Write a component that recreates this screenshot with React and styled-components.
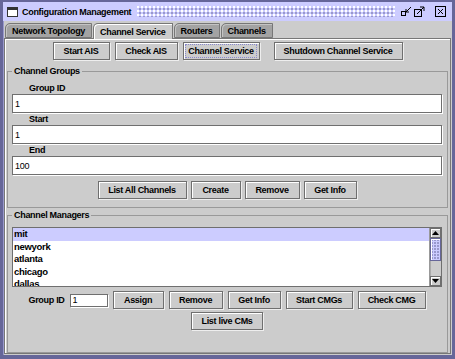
import React from "react";
import styled, { createGlobalStyle } from "styled-components";

const FONT = `"Liberation Sans", Arial, sans-serif`;

const GlobalStyle = createGlobalStyle`
  html, body {
    margin: 0;
    padding: 0;
    background: #666699;
  }
  * {
    box-sizing: border-box;
  }
`;

const managers = ["mit", "newyork", "atlanta", "chicago", "dallas"];

const App = () => {
  return (
    <>
      <GlobalStyle />
      <Frame>
        <TitleBar>
          <WindowIcon />
          <Title>Configuration Management</Title>
          <Bumps />
          <TitleIcons>
            <svg width="11" height="11" viewBox="0 0 11 11">
              <rect x="0.5" y="5.5" width="4" height="4" fill="none" stroke="#000" />
              <path d="M5 6 L10 1" stroke="#000" />
              <path d="M5 3 L5 6 L8 6" fill="none" stroke="#000" />
            </svg>
            <svg width="11" height="11" viewBox="0 0 11 11">
              <rect x="0.5" y="3.5" width="7" height="7" fill="none" stroke="#000" />
              <path d="M3 8 L10 1" stroke="#000" />
              <path d="M6 1 L10 1 L10 5" fill="none" stroke="#000" />
            </svg>
            <svg width="11" height="11" viewBox="0 0 11 11">
              <rect x="0.5" y="0.5" width="10" height="10" fill="#ccccff" stroke="#000" />
              <path d="M3 3 L8 8 M8 3 L3 8" stroke="#000" />
            </svg>
          </TitleIcons>
        </TitleBar>

        <TabStrip>
          <Tab>Network Topology</Tab>
          <Tab selected>Channel Service</Tab>
          <Tab>Routers</Tab>
          <Tab>Channels</Tab>
        </TabStrip>

        <TabPanel>
          <ButtonRow>
            <Button w={57}>Start AIS</Button>
            <Button w={63}>Check AIS</Button>
            <Button w={77}>
              <FocusText>Channel Service</FocusText>
            </Button>
            <Button w={129} lead={9}>Shutdown Channel Service</Button>
          </ButtonRow>

          <Group>
            <Legend>Channel Groups</Legend>
            <FieldLabel first>Group ID</FieldLabel>
            <TextField defaultValue="1" />
            <FieldLabel>Start</FieldLabel>
            <TextField defaultValue="1" />
            <FieldLabel>End</FieldLabel>
            <TextField defaultValue="100" />
            <ButtonRow gap={4} top={6}>
              <Button w={89}>List All Channels</Button>
              <Button w={50}>Create</Button>
              <Button w={55}>Remove</Button>
              <Button w={53}>Get Info</Button>
            </ButtonRow>
          </Group>

          <Group grow>
            <Legend>Channel Managers</Legend>
            <ListBox>
              <ListItems>
                {managers.map((m, i) => (
                  <ListItem key={m} selected={i === 0}>
                    {m}
                  </ListItem>
                ))}
              </ListItems>
              <ScrollBar>
                <ArrowButton>
                  <svg width="7" height="4" viewBox="0 0 7 4">
                    <path d="M0 4 L3.5 0 L7 4 Z" fill="#000" />
                  </svg>
                </ArrowButton>
                <Thumb />
                <Track />
                <ArrowButton>
                  <svg width="7" height="4" viewBox="0 0 7 4">
                    <path d="M0 0 L3.5 4 L7 0 Z" fill="#000" />
                  </svg>
                </ArrowButton>
              </ScrollBar>
            </ListBox>
            <ButtonRow top={4}>
              <InlineLabel>Group ID</InlineLabel>
              <SmallField defaultValue="1" />
              <Button w={51}>Assign</Button>
              <Button w={54}>Remove</Button>
              <Button w={53}>Get Info</Button>
              <Button w={67}>Start CMGs</Button>
              <Button w={68}>Check CMG</Button>
            </ButtonRow>
            <ButtonRow top={3}>
              <Button w={72}>List live CMs</Button>
            </ButtonRow>
          </Group>
        </TabPanel>
      </Frame>
    </>
  );
};

export default App;

// Window frame
const Frame = styled.div`
  width: 455px;
  height: 359px;
  display: flex;
  flex-direction: column;
  background: #cccccc;
  border-style: solid;
  border-color: #666699;
  border-width: 2px 3px 4px 3px;
  box-shadow: inset 1px 1px 0 #9999cc;
  font-family: ${FONT};
  font-size: 9px;
  letter-spacing: -0.3px;
  font-weight: bold;
  color: #000;
  overflow: hidden;
`;

const TitleBar = styled.div`
  height: 19px;
  display: flex;
  align-items: center;
  padding: 0 4px 0 4px;
  background: #ccccff;
`;

const WindowIcon = styled.div`
  width: 11px;
  height: 10px;
  border: 1px solid #333;
  border-top-width: 3px;
  background: #fff;
  margin-right: 4px;
`;

const Title = styled.span`
  white-space: nowrap;
`;

const Bumps = styled.div`
  flex: 1;
  height: 11px;
  margin: 0 6px;
  background-image: radial-gradient(circle at 1px 1px, #fff 0.8px, transparent 1px),
    radial-gradient(circle at 3px 3px, #9999cc 0.8px, transparent 1px);
  background-size: 4px 4px;
`;

const TitleIcons = styled.div`
  display: flex;
  align-items: center;
  gap: 2px;
  padding-right: 2px;
  svg {
    display: block;
  }
  svg:last-child {
    margin-left: 8px;
  }
`;

// Tabs
const TabStrip = styled.div`
  display: flex;
  align-items: flex-end;
  height: 16px;
  padding-left: 2px;
  margin-top: 1px;
  position: relative;
  z-index: 1;
`;

const Tab = styled.div`
  height: ${(p) => (p.selected ? "16px" : "15px")};
  display: flex;
  align-items: center;
  padding: 0 6px;
  margin-right: 1px;
  background: ${(p) => (p.selected ? "#cccccc" : "#a3a3a3")};
  border: 1px solid #777;
  border-bottom: ${(p) => (p.selected ? "none" : "1px solid #777")};
  border-top-left-radius: 5px;
  box-shadow: inset 1px 1px 0 ${(p) => (p.selected ? "#fff" : "#c4c4c4")};
  white-space: nowrap;
  margin-bottom: ${(p) => (p.selected ? "-1px" : "0")};
`;

const TabPanel = styled.div`
  flex: 1;
  display: flex;
  flex-direction: column;
  margin: 0 1px 1px 1px;
  padding: 3px 0 0 0;
  border: 1px solid #777;
  box-shadow: inset 1px 1px 0 #fff;
`;

// Buttons
const ButtonRow = styled.div`
  display: flex;
  justify-content: center;
  align-items: center;
  gap: ${(p) => p.gap ?? 5}px;
  margin-top: ${(p) => p.top ?? 0}px;
`;

const Button = styled.div`
  width: ${(p) => p.w}px;
  height: 18px;
  margin-left: ${(p) => p.lead ?? 0}px;
  display: flex;
  align-items: center;
  justify-content: center;
  background: #cccccc;
  border: 1px solid #6f6f6f;
  box-shadow: inset 1px 1px 0 #fff, 1px 1px 0 #eee;
  white-space: nowrap;
`;

const FocusText = styled.span`
  outline: 1px dotted #8888cc;
  padding: 1px 2px;
`;

// Titled groups
const Group = styled.fieldset`
  margin: ${(p) => (p.grow ? "1px 2px 0 2px" : "5px 2px 0 2px")};
  padding: 0 5px ${(p) => (p.grow ? "0" : "8px")} 4px;
  border: 1px solid #999;
  min-width: 0;
  display: flex;
  flex-direction: column;
  flex: ${(p) => (p.grow ? 1 : "none")};
`;

const Legend = styled.legend`
  padding: 0 2px;
  margin-left: 0;
  line-height: 12px;
`;

const FieldLabel = styled.div`
  height: 12px;
  line-height: 12px;
  padding-left: 17px;
  margin-top: ${(p) => (p.first ? 5 : 0)}px;
`;

const TextField = styled.input`
  display: block;
  width: 100%;
  height: 19px;
  margin: 0;
  padding: 0 2px;
  border: 1px solid #6f6f6f;
  box-shadow: 1px 1px 0 #fff;
  background: #fff;
  font-family: ${FONT};
  font-size: 9px;
  letter-spacing: -0.2px;
  font-weight: normal;
  color: #000;
  outline: none;
`;

// List of channel managers
const ListBox = styled.div`
  display: flex;
  height: 60px;
  margin-top: 6px;
  border: 1px solid #6f6f6f;
  background: #fff;
`;

const ListItems = styled.div`
  flex: 1;
  overflow: hidden;
`;

const ListItem = styled.div`
  height: 12.5px;
  line-height: 12.5px;
  padding-left: 1px;
  font-size: 9.5px;
  background: ${(p) => (p.selected ? "#ccccff" : "transparent")};
`;

const ScrollBar = styled.div`
  width: 12px;
  display: flex;
  flex-direction: column;
  background: #cccccc;
  border-left: 1px solid #999;
`;

const ArrowButton = styled.div`
  height: 10px;
  display: flex;
  align-items: center;
  justify-content: center;
  border: 1px solid #6f6f6f;
  box-shadow: inset 1px 1px 0 #fff;
  svg {
    display: block;
  }
`;

const Thumb = styled.div`
  height: 23px;
  background-color: #ccccff;
  background-image: radial-gradient(circle at 1px 1px, #9999cc 0.8px, transparent 1px);
  background-size: 3px 3px;
  border: 1px solid #666699;
  box-shadow: inset 1px 1px 0 #fff;
`;

const Track = styled.div`
  flex: 1;
  background: #cccccc;
  border-left: 1px solid #aaa;
`;

const InlineLabel = styled.span`
  white-space: nowrap;
`;

const SmallField = styled(TextField)`
  width: 38px;
  height: 13px;
  flex: none;
`;
